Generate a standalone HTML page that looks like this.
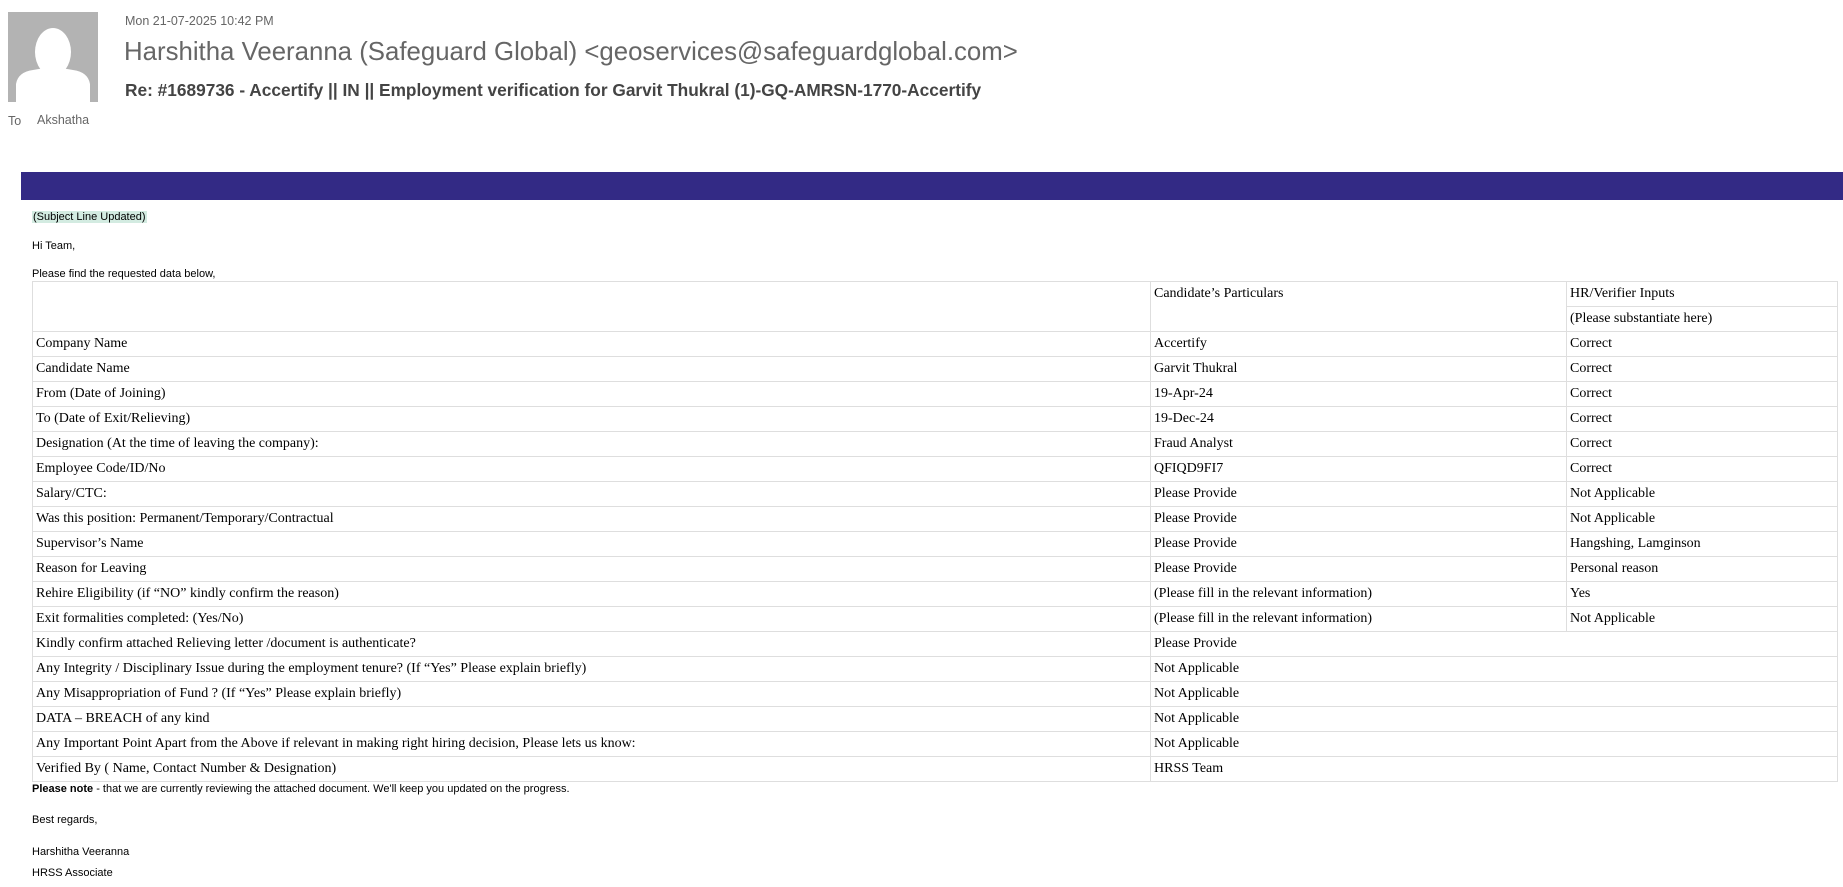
<!DOCTYPE html>
<html><head><meta charset="utf-8"><style>
body{margin:0;width:1843px;height:887px;background:#fff;position:relative;overflow:hidden;font-family:"Liberation Sans",sans-serif}
.a{position:absolute;white-space:nowrap}
.sm{font-size:11px;color:#000}
table{position:absolute;left:32px;top:281px;width:1806px;border-collapse:collapse;font-family:"Liberation Serif",serif;font-size:14px;color:#000}
tr{height:25px}
td{border:1.5px solid #dedede;padding:0 3px;vertical-align:middle;white-space:nowrap;line-height:16px}
</style></head><body>
<div class="a" style="left:8px;top:12px;width:90px;height:90px;background:#b3b3b3;overflow:hidden">
<svg width="90" height="90" viewBox="0 0 90 90"><ellipse cx="45" cy="40" rx="18" ry="24" fill="#fff"/><path d="M8 90 L8 72 Q10 60 25 58 Q35 56 45 56 Q55 56 65 58 Q80 60 82 72 L82 90 Z" fill="#fff"/></svg>
</div>
<div class="a" style="left:125px;top:14px;font-size:12.5px;color:#666">Mon 21-07-2025 10:42 PM</div>
<div class="a" style="left:124px;top:38px;font-size:25.8px;color:#666">Harshitha Veeranna (Safeguard Global) &lt;geoservices@safeguardglobal.com&gt;</div>
<div class="a" style="left:125px;top:80px;font-size:17.3px;font-weight:bold;color:#444">Re: #1689736 - Accertify || IN || Employment verification for Garvit Thukral (1)-GQ-AMRSN-1770-Accertify</div>
<div class="a" style="left:8px;top:114px;font-size:12.5px;color:#666">To</div>
<div class="a" style="left:37px;top:113px;font-size:12.5px;color:#666">Akshatha</div>
<div class="a" style="left:21px;top:172px;width:1822px;height:28px;background:#332a85"></div>
<div class="a sm" style="left:32px;top:211px;background:#d3ebe1;padding:0 1px">(Subject Line Updated)</div>
<div class="a sm" style="left:32px;top:240px">Hi Team,</div>
<div class="a sm" style="left:32px;top:268px">Please find the requested data below,</div>
<table>
<colgroup><col style="width:1118px"><col style="width:416px"><col></colgroup>
<tr><td rowspan="2"></td><td rowspan="2" style="vertical-align:top;padding-top:4px">Candidate’s Particulars</td><td>HR/Verifier Inputs</td></tr>
<tr><td>(Please substantiate here)</td></tr>
<tr><td>Company Name</td><td>Accertify</td><td>Correct</td></tr>
<tr><td>Candidate Name</td><td>Garvit Thukral</td><td>Correct</td></tr>
<tr><td>From (Date of Joining)</td><td>19-Apr-24</td><td>Correct</td></tr>
<tr><td>To (Date of Exit/Relieving)</td><td>19-Dec-24</td><td>Correct</td></tr>
<tr><td>Designation (At the time of leaving the company):</td><td>Fraud Analyst</td><td>Correct</td></tr>
<tr><td>Employee Code/ID/No</td><td>QFIQD9FI7</td><td>Correct</td></tr>
<tr><td>Salary/CTC:</td><td>Please Provide</td><td>Not Applicable</td></tr>
<tr><td>Was this position: Permanent/Temporary/Contractual</td><td>Please Provide</td><td>Not Applicable</td></tr>
<tr><td>Supervisor’s Name</td><td>Please Provide</td><td>Hangshing, Lamginson</td></tr>
<tr><td>Reason for Leaving</td><td>Please Provide</td><td>Personal reason</td></tr>
<tr><td>Rehire Eligibility (if “NO” kindly confirm the reason)</td><td>(Please fill in the relevant information)</td><td>Yes</td></tr>
<tr><td>Exit formalities completed: (Yes/No)</td><td>(Please fill in the relevant information)</td><td>Not Applicable</td></tr>
<tr><td>Kindly confirm attached Relieving letter /document is authenticate?</td><td colspan="2">Please Provide</td></tr>
<tr><td>Any Integrity / Disciplinary Issue during the employment tenure? (If “Yes” Please explain briefly)</td><td colspan="2">Not Applicable</td></tr>
<tr><td>Any Misappropriation of Fund ? (If “Yes” Please explain briefly)</td><td colspan="2">Not Applicable</td></tr>
<tr><td>DATA – BREACH of any kind</td><td colspan="2">Not Applicable</td></tr>
<tr><td>Any Important Point Apart from the Above if relevant in making right hiring decision, Please lets us know:</td><td colspan="2">Not Applicable</td></tr>
<tr><td>Verified By ( Name, Contact Number &amp; Designation)</td><td colspan="2">HRSS Team</td></tr>
</table>
<div class="a sm" style="left:32px;top:783px"><b>Please note</b> - that we are currently reviewing the attached document. We'll keep you updated on the progress.</div>
<div class="a sm" style="left:32px;top:814px">Best regards,</div>
<div class="a sm" style="left:32px;top:846px">Harshitha Veeranna</div>
<div class="a sm" style="left:32px;top:867px">HRSS Associate</div>
</body></html>
